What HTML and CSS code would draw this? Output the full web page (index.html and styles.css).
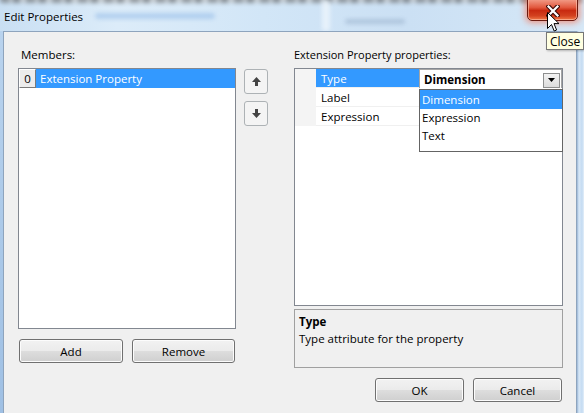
FILE: index.html
```html
<!DOCTYPE html>
<html>
<head>
<meta charset="utf-8">
<link rel="stylesheet" href="styles.css">
</head>
<body>
<div class="screen">
  <div class="titlebar">
    <div class="blur blur-top"></div>
    <div class="blur blur-a"></div>
    <div class="blur blur-b"></div>
    <div class="blur blur-c"></div>
    <span class="title">Edit Properties</span>
    <div class="close-btn">
      <svg width="14" height="12" viewBox="0 0 14 12">
        <path d="M2.5 1.5 L11.5 10.5 M11.5 1.5 L2.5 10.5" stroke="#3a0a06" stroke-width="4.4" stroke-linecap="square" fill="none"/>
        <path d="M2.5 1.5 L11.5 10.5 M11.5 1.5 L2.5 10.5" stroke="#ffffff" stroke-width="2.2" stroke-linecap="square" fill="none"/>
      </svg>
    </div>
  </div>
  <div class="body">
    <div class="frame-left"></div>
    <div class="client">
      <div class="col-left">
        <div class="label">Members:</div>
        <div class="listbox">
          <div class="list-row">
            <span class="index-cell">0</span>
            <span class="list-item selected">Extension Property</span>
          </div>
        </div>
        <div class="btn-row left-btns">
          <button class="btn btn-add">Add</button>
          <button class="btn btn-remove">Remove</button>
        </div>
      </div>
      <div class="col-arrows">
        <button class="arrow-btn">
          <svg width="11" height="11" viewBox="0 0 11 11"><path d="M5.5 1 L10 6 L7 6 L7 10 L4 10 L4 6 L1 6 Z" fill="#444"/></svg>
        </button>
        <button class="arrow-btn">
          <svg width="11" height="11" viewBox="0 0 11 11"><path d="M5.5 10 L10 5 L7 5 L7 1 L4 1 L4 5 L1 5 Z" fill="#444"/></svg>
        </button>
      </div>
      <div class="col-right">
        <div class="label label-right">Extension Property properties:</div>
        <div class="propgrid">
          <div class="prop-row">
            <span class="gutter"></span>
            <span class="prop-name selected">Type</span>
            <span class="prop-value edit">
              <span class="value-text">Dimension</span>
              <span class="combo-btn">
                <svg width="7" height="4" viewBox="0 0 7 4"><path d="M0 0 L7 0 L3.5 4 Z" fill="#000"/></svg>
              </span>
            </span>
          </div>
          <div class="prop-row">
            <span class="gutter"></span>
            <span class="prop-name">Label</span>
            <span class="prop-value"></span>
          </div>
          <div class="prop-row">
            <span class="gutter"></span>
            <span class="prop-name">Expression</span>
            <span class="prop-value"></span>
          </div>
          <div class="dropdown">
            <div class="dd-item selected">Dimension</div>
            <div class="dd-item">Expression</div>
            <div class="dd-item">Text</div>
          </div>
        </div>
        <div class="description">
          <div class="desc-title">Type</div>
          <div class="desc-text">Type attribute for the property</div>
        </div>
        <div class="btn-row right-btns">
          <button class="btn btn-ok">OK</button>
          <button class="btn btn-cancel">Cancel</button>
        </div>
      </div>
    </div>
    <div class="frame-right"></div>
  </div>
  <div class="tooltip">Close</div>
  <svg class="cursor" width="13" height="21" viewBox="0 0 13 21">
    <path d="M0.5 0.5 L0.5 16.5 L4.5 12.5 L7.2 19 L9.6 18 L7 11.6 L12 11.6 Z" fill="#ffffff" stroke="#000000" stroke-width="1" stroke-linejoin="miter"/>
  </svg>
</div>
</body>
</html>
```
FILE: styles.css
```css
* { box-sizing: border-box; }
html, body { margin: 0; padding: 0; }
body {
  width: 584px;
  height: 413px;
  overflow: hidden;
  font-family: "Segoe UI", "Open Sans", "Noto Sans", sans-serif;
  font-size: 11px;
  color: #000;
}
.screen {
  position: relative;
  width: 584px;
  height: 413px;
  background: #c9def2;
  overflow: hidden;
}
.titlebar {
  position: relative;
  height: 31px;
  background: linear-gradient(90deg, #c9dff3 0%, #dcecf9 20%, #d2e6f7 45%, #cbe0f4 70%, #d6e8f7 100%);
  overflow: hidden;
}
.blur {
  position: absolute;
  filter: blur(2px);
  border-radius: 3px;
}
.blur-top {
  left: 0; top: -5px; width: 584px; height: 8px;
  background: repeating-linear-gradient(90deg, #666 0 9px, #b0b0b0 9px 13px, #555 13px 20px, #c0c0c0 20px 26px);
  opacity: 0.6;
}
.blur-a { left: 95px; top: 13px; width: 120px; height: 6px; background: #8cb6e6; opacity: 0.5; }
.blur-b { left: 345px; top: 19px; width: 60px; height: 5px; background: #8aa3c0; opacity: 0.45; }
.blur-c { left: 322px; top: 0px; width: 8px; height: 31px; background: #eef6fd; opacity: 0.8; }
.title {
  position: absolute;
  left: 4px;
  top: 8px;
  line-height: 18px;
  font-size: 11.5px;
  color: #000;
}
.close-btn {
  position: absolute;
  left: 527px;
  top: -2px;
  width: 51px;
  height: 23px;
  border: 1px solid #6b1a10;
  border-radius: 0 0 5px 5px;
  background: linear-gradient(180deg, #f3a08c 0%, #e2593f 40%, #c82a10 55%, #d3411f 80%, #f07a48 100%);
  box-shadow: 0 0 6px 2px rgba(255, 90, 50, 0.55), inset 0 0 0 1px rgba(255, 200, 180, 0.6);
  display: flex;
  align-items: center;
  justify-content: center;
  padding-top: 2px;
}
.body {
  display: flex;
  height: 382px;
}
.frame-left {
  width: 3px;
  background: linear-gradient(180deg, #b9d3ee, #9fc0e4);
}
.frame-right {
  width: 7px;
  background: linear-gradient(90deg, #9ab6d6 0, #d8e8f7 2px, #c4dbf2 5px, #e4eff9 7px);
}
.client {
  width: 574px;
  background: #f0f0f0;
  border-top: 1px solid #8ea4bd;
  border-left: 1px solid #8ea4bd;
  border-right: 1px solid #8ea4bd;
  display: flex;
  padding: 14px 0 0 14px;
}
.col-left {
  width: 218px;
  display: flex;
  flex-direction: column;
}
.label {
  height: 16px;
  line-height: 17px;
  padding-left: 3px;
  margin-bottom: 6px;
  font-size: 11.5px;
}
.label-right { padding-left: 0; font-size: 11px; }
.listbox {
  height: 261px;
  background: #fff;
  border: 1px solid #828790;
}
.list-row {
  display: flex;
  height: 19px;
}
.index-cell {
  width: 17px;
  height: 19px;
  line-height: 18px;
  text-align: center;
  font-size: 11.5px;
  background: #ececec;
  border-top: 1px solid #fff;
  border-left: 1px solid #fff;
  border-right: 1px solid #7a7a7a;
  border-bottom: 1px solid #7a7a7a;
}
.list-item {
  flex: 1;
  line-height: 20px;
  padding-left: 4px;
  font-size: 11.5px;
}
.selected {
  background: #3399ff;
  color: #fff;
}
.btn-row {
  display: flex;
  gap: 9px;
  margin-top: 10px;
}
.left-btns { padding-left: 1px; }
.right-btns { justify-content: flex-end; padding-right: 1px; }
.btn {
  height: 24px;
  font-family: inherit;
  font-size: 11.5px;
  color: #000;
  border: 1px solid #707070;
  border-radius: 3px;
  background: linear-gradient(180deg, #f2f2f2 0%, #ebebeb 48%, #dddddd 52%, #cfcfcf 100%);
  box-shadow: inset 0 0 0 1px #fcfcfc;
  padding: 1px 0 0 0;
}
.btn-add { width: 104px; }
.btn-remove { width: 103px; }
.btn-ok, .btn-cancel { width: 89px; }
.col-arrows {
  width: 24px;
  margin-left: 8px;
  padding-top: 23px;
  display: flex;
  flex-direction: column;
  gap: 7px;
}
.arrow-btn {
  width: 24px;
  height: 25px;
  border: 1px solid #adb2b5;
  border-radius: 3px;
  background: #f4f4f4;
  padding: 0;
  display: flex;
  align-items: center;
  justify-content: center;
}
.col-right {
  width: 269px;
  margin-left: 26px;
  display: flex;
  flex-direction: column;
}
.propgrid {
  position: relative;
  height: 238px;
  background: #fff;
  border: 1px solid #828790;
}
.prop-row {
  display: flex;
  height: 19px;
}
.gutter {
  width: 21px;
  background: #f4f4f4;
}
.prop-name {
  width: 103px;
  line-height: 20px;
  padding-left: 5px;
  font-size: 11.5px;
  border-bottom: 1px solid #f0f0f0;
}
.prop-value {
  flex: 1;
  border-bottom: 1px solid #f0f0f0;
  border-left: 1px solid #f0f0f0;
}
.prop-value.edit {
  display: flex;
  align-items: center;
  justify-content: space-between;
  border: 1px solid #a5a5a5;
  border-bottom: none;
  padding: 0 0 0 4px;
}
.value-text { font-weight: bold; line-height: 19px; font-size: 11.5px; padding-top: 1px; }
.combo-btn {
  width: 17px;
  height: 15px;
  margin-right: 1px;
  margin-top: 2px;
  border: 1px solid #8e8f8f;
  background: linear-gradient(180deg, #f3f3f3, #dcdcdc);
  display: flex;
  align-items: center;
  justify-content: center;
}
.dropdown {
  position: absolute;
  left: 124px;
  top: 20px;
  width: 144px;
  height: 63px;
  background: #fff;
  border: 1px solid #646464;
  font-size: 11.5px;
}
.dd-item {
  height: 18px;
  line-height: 17px;
  padding-left: 2px;
}
.dd-item.selected { height: 19px; line-height: 20px; }
.description {
  margin-top: 3px;
  height: 59px;
  border: 1px solid #a0a0a0;
  background: #f0f0f0;
  padding: 3px 0 0 4px;
  font-size: 11.5px;
}
.desc-title { font-weight: bold; line-height: 17px; }
.desc-text { line-height: 17px; }
.tooltip {
  position: absolute;
  left: 546px;
  top: 32px;
  height: 18px;
  padding: 0 3px;
  line-height: 17px;
  background: #ffffe1;
  border: 1px solid #767676;
  font-size: 12px;
  box-shadow: 1px 1px 2px rgba(0,0,0,0.25);
}
.cursor {
  position: absolute;
  left: 547px;
  top: 12px;
}
```
